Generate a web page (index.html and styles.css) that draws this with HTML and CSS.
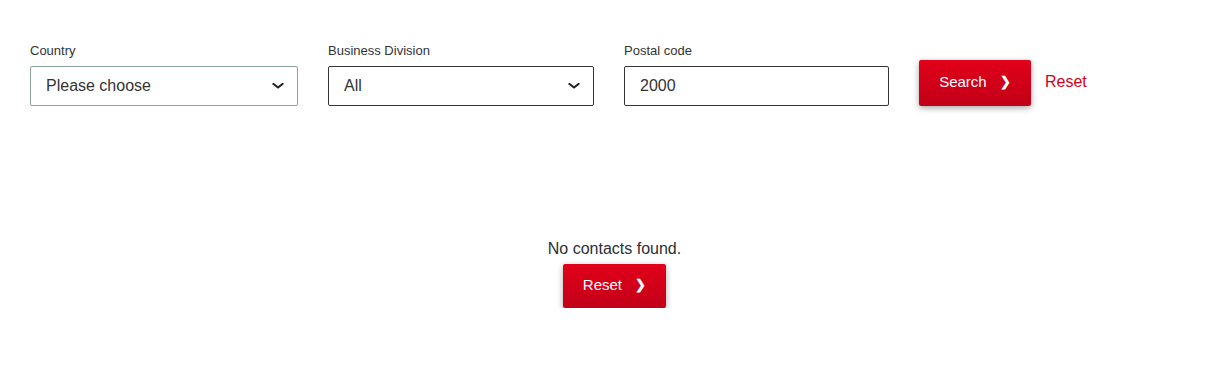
FILE: index.html
```html
<!DOCTYPE html>
<html lang="en">
<head>
    <meta charset="UTF-8">
    <meta name="viewport" content="width=device-width, initial-scale=1.0">
    <title>Contact Search</title>
    <link rel="stylesheet" href="styles.css">
</head>
<body>
    <div class="page">
        <form class="search-form" id="searchForm">
            <div class="form-group country">
                <label for="country">Country</label>
                <div class="select-box select-country">
                    <span class="select-value">Please choose</span>
                    <svg class="chevron" width="12" height="8" viewBox="0 0 12 8"><path d="M1.5 2 L6 5.5 L10.5 2" fill="none" stroke="#222" stroke-width="2.2" stroke-linecap="round" stroke-linejoin="round"/></svg>
                </div>
            </div>
            <div class="form-group division">
                <label for="division">Business Division</label>
                <div class="select-box">
                    <span class="select-value">All</span>
                    <svg class="chevron" width="12" height="8" viewBox="0 0 12 8"><path d="M1.5 2 L6 5.5 L10.5 2" fill="none" stroke="#222" stroke-width="2.2" stroke-linecap="round" stroke-linejoin="round"/></svg>
                </div>
            </div>
            <div class="form-group postal">
                <label for="postal">Postal code</label>
                <input type="text" id="postal" name="postal" value="2000">
            </div>
            <div class="actions">
                <button type="submit" class="btn">Search <span class="arrow">❯</span></button>
                <a href="#" class="reset-link">Reset</a>
            </div>
        </form>

        <div class="results">
            <p class="empty">No contacts found.</p>
            <button type="button" class="btn btn-small">Reset <span class="arrow">❯</span></button>
        </div>
    </div>
</body>
</html>
```

FILE: styles.css
```css
body {
    font-family: "Liberation Sans", Arial, sans-serif;
    background-color: #fff;
    margin: 0;
    padding: 0;
    color: #222;
}
.page {
    padding: 43px 10px 0 30px;
}
.search-form {
    display: flex;
    align-items: flex-end;
}
.form-group {
    display: flex;
    flex-direction: column;
    margin-right: 30px;
}
.country {
    width: 268px;
}
.division {
    width: 266px;
}
.postal {
    width: 265px;
}
label {
    font-size: 13px;
    line-height: 16px;
    color: #333;
    margin-bottom: 7px;
}
.select-box,
input {
    height: 40px;
    box-sizing: border-box;
    border: 1px solid #333;
    border-radius: 2px;
    font-family: inherit;
    font-size: 16px;
    color: #333;
    padding: 0 15px;
    display: flex;
    align-items: center;
    justify-content: space-between;
}
.select-country {
    border-color: #8aa39e;
}
.chevron {
    margin-right: -2px;
}
input {
    width: 100%;
    outline: none;
}
.actions {
    display: flex;
    align-items: center;
}
.btn {
    font-family: inherit;
    background: linear-gradient(#e2001a, #c10018);
    color: #fff;
    border: none;
    border-radius: 2px;
    box-shadow: 0 2px 6px rgba(0, 0, 0, 0.35);
    font-size: 15px;
    width: 112px;
    height: 46px;
    cursor: pointer;
    padding: 0 0 3px;
}
.arrow {
    font-weight: bold;
    margin-left: 9px;
    font-size: 13px;
    vertical-align: 1px;
}
.reset-link {
    color: #d4001a;
    text-decoration: none;
    font-size: 16px;
    margin-left: 14px;
    margin-bottom: 2px;
}
.results {
    text-align: center;
    margin-top: 134px;
}
.empty {
    margin: 0 0 6px;
    font-size: 16px;
    line-height: 18px;
    color: #2a2f33;
}
.btn-small {
    width: 103px;
    height: 44px;
}
```
